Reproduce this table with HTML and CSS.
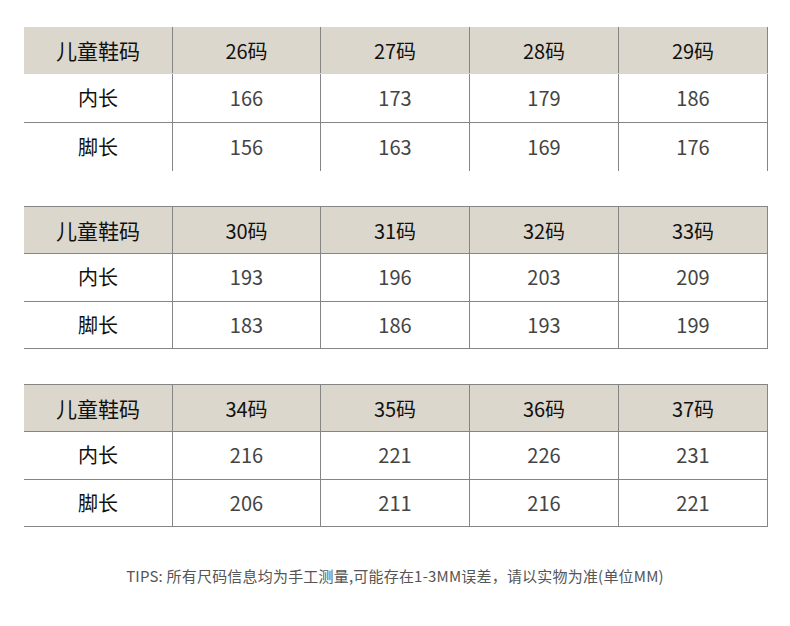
FILE: index.html
```html
<!DOCTYPE html>
<html lang="zh-CN">
<head>
<meta charset="utf-8">
<link rel="stylesheet" href="styles.css">
</head>
<body>
<div class="page">
  <div class="size-table first">
    <div class="row head"><div class="cell">儿童鞋码</div><div class="cell">26码</div><div class="cell">27码</div><div class="cell">28码</div><div class="cell">29码</div></div>
    <div class="row mid"><div class="cell label">内长</div><div class="cell">166</div><div class="cell">173</div><div class="cell">179</div><div class="cell">186</div></div>
    <div class="row last"><div class="cell label">脚长</div><div class="cell">156</div><div class="cell">163</div><div class="cell">169</div><div class="cell">176</div></div>
  </div>
  <div class="size-table boxed">
    <div class="row head"><div class="cell">儿童鞋码</div><div class="cell">30码</div><div class="cell">31码</div><div class="cell">32码</div><div class="cell">33码</div></div>
    <div class="row mid"><div class="cell label">内长</div><div class="cell">193</div><div class="cell">196</div><div class="cell">203</div><div class="cell">209</div></div>
    <div class="row last"><div class="cell label">脚长</div><div class="cell">183</div><div class="cell">186</div><div class="cell">193</div><div class="cell">199</div></div>
  </div>
  <div class="size-table boxed">
    <div class="row head"><div class="cell">儿童鞋码</div><div class="cell">34码</div><div class="cell">35码</div><div class="cell">36码</div><div class="cell">37码</div></div>
    <div class="row mid"><div class="cell label">内长</div><div class="cell">216</div><div class="cell">221</div><div class="cell">226</div><div class="cell">231</div></div>
    <div class="row last"><div class="cell label">脚长</div><div class="cell">206</div><div class="cell">211</div><div class="cell">216</div><div class="cell">221</div></div>
  </div>
  <p class="tips">TIPS: 所有尺码信息均为手工测量,可能存在1-3MM误差，请以实物为准(单位MM)</p>
</div>
</body>
</html>
```
FILE: styles.css
```css
html, body {
  margin: 0;
  padding: 0;
  background: #ffffff;
}
body {
  font-family: "Noto Sans CJK SC", "Noto Sans", sans-serif;
}
.page {
  width: 790px;
  padding: 27px 0 0 24px;
  box-sizing: border-box;
}
.size-table {
  width: 744px;
  display: flex;
  flex-direction: column;
}
.size-table + .size-table {
  margin-top: 35px;
}
.size-table.boxed {
  border-top: 1px solid #858585;
}
.row {
  display: grid;
  grid-template-columns: 148px 148px 149px 149px 150px;
  height: 47px;
  box-sizing: border-box;
  border-bottom: 1px solid #858585;
}
.row.mid {
  height: 48px;
}
.first .row.mid {
  height: 49px;
}
.first .row.head {
  border-bottom-color: #dcd7cc;
}
.first .row.last {
  height: 48px;
  border-bottom: none;
}
.row.head {
  background: #dcd7cc;
}
.cell {
  display: flex;
  align-items: center;
  justify-content: center;
  box-sizing: border-box;
  font-size: 20px;
  color: #444444;
  border-left: 1px solid #858585;
}
.row:not(.head) .cell {
  padding-bottom: 2px;
}
.cell:first-child {
  border-left: none;
}
.cell:last-child {
  border-right: 1px solid #858585;
}
.row.head .cell,
.cell.label {
  color: #111111;
}
.row.head .cell:first-child {
  font-size: 21px;
}
.tips {
  margin: 38px 0 0 -24px;
  width: 790px;
  text-align: center;
  font-size: 15px;
  line-height: 22px;
  letter-spacing: 0.2px;
  color: #555555;
}
```
